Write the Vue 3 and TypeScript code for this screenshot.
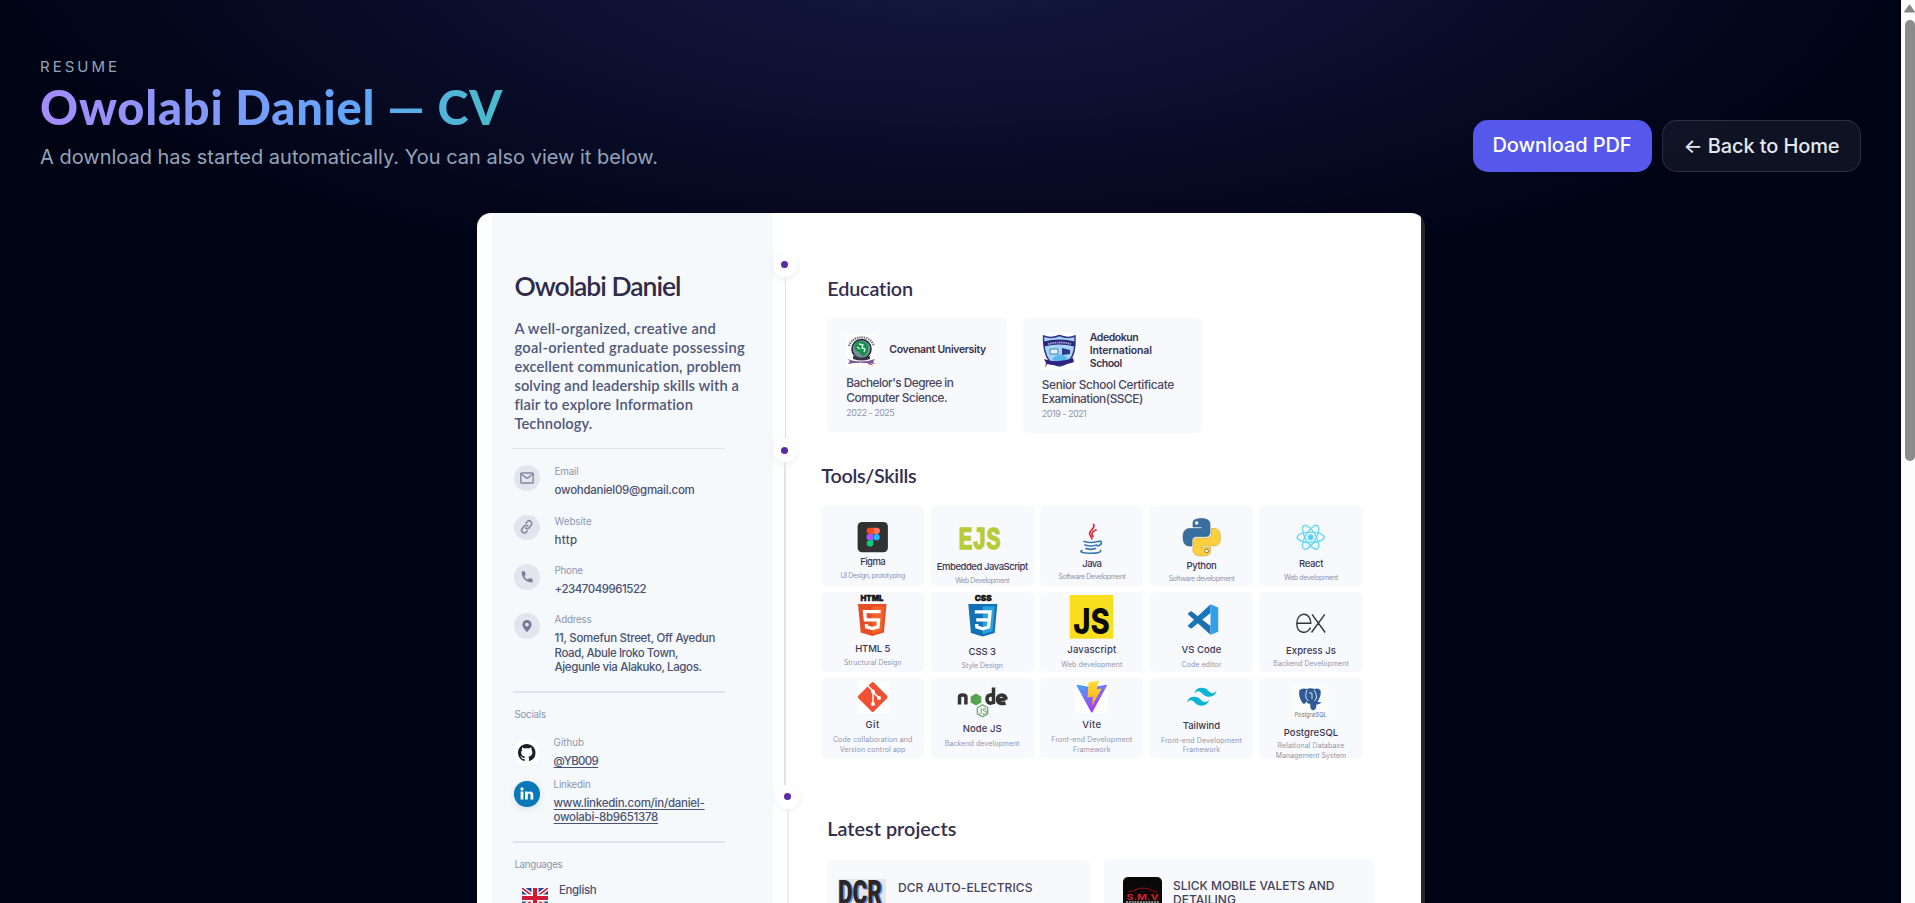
<script setup lang="ts">
interface Line {
  text: string
  width: number
}
interface Contact {
  icon: 'mail' | 'link' | 'phone' | 'pin'
  label: Line
  value: Line[]
}
interface Skill {
  id: string
  name: Line
  detail: Line[]
  artHeight: number
  gap: number
}

// Adjusts tracking so that a line of text fills its intended measure.
const vFit = {
  mounted(el: HTMLElement, binding: { value: number }) {
    const natural = el.getBoundingClientRect().width
    const count = (el.textContent ?? '').length
    if (count > 0) {
      el.style.letterSpacing = `${(binding.value - natural) / count}px`
    }
  },
}

const line = (text: string, width: number): Line => ({ text, width })

const summary: Line[] = [
  line('A well-organized, creative and', 202),
  line('goal-oriented graduate possessing', 230.5),
  line('excellent communication, problem', 227),
  line('solving and leadership skills with a', 224.5),
  line('flair to explore Information', 179),
  line('Technology.', 78),
]

const contacts: Contact[] = [
  { icon: 'mail', label: line('Email', 24), value: [line('owohdaniel09@gmail.com', 140)] },
  { icon: 'link', label: line('Website', 37), value: [line('http', 23)] },
  { icon: 'phone', label: line('Phone', 28), value: [line('+2347049961522', 91.5)] },
  {
    icon: 'pin',
    label: line('Address', 37),
    value: [
      line('11, Somefun Street, Off Ayedun', 160.5),
      line('Road, Abule Iroko Town,', 123.5),
      line('Ajegunle via Alakuko, Lagos.', 147),
    ],
  },
]

const skills: Skill[] = [
  { id: 'figma', name: line('Figma', 25), detail: [line('UI Design, prototyping', 64.5)], artHeight: 49.5, gap: 3.1 },
  { id: 'ejs', name: line('Embedded JavaScript', 91), detail: [line('Web Development', 54)], artHeight: 54.3, gap: 3.1 },
  { id: 'java', name: line('Java', 19), detail: [line('Software Development', 67)], artHeight: 50.8, gap: 3.1 },
  { id: 'python', name: line('Python', 30), detail: [line('Software development', 66)], artHeight: 52.8, gap: 3.1 },
  { id: 'react', name: line('React', 24), detail: [line('Web development', 54)], artHeight: 51.5, gap: 2.9 },
  { id: 'html', name: line('HTML 5', 35), detail: [line('Structural Design', 58)], artHeight: 50, gap: 4.3 },
  { id: 'css', name: line('CSS 3', 27.5), detail: [line('Style Design', 41.5)], artHeight: 53, gap: 4.3 },
  { id: 'js', name: line('Javascript', 49), detail: [line('Web development', 61)], artHeight: 51.6, gap: 4 },
  { id: 'vscode', name: line('VS Code', 40), detail: [line('Code editor', 40)], artHeight: 51.3, gap: 4.2 },
  { id: 'express', name: line('Express Js', 50), detail: [line('Backend Development', 75.5)], artHeight: 52.3, gap: 3 },
  { id: 'git', name: line('Git', 14.5), detail: [line('Code collaboration and', 79.5), line('Version control app', 66)], artHeight: 40.8, gap: 4.5 },
  { id: 'node', name: line('Node JS', 39), detail: [line('Backend development', 75)], artHeight: 44.8, gap: 4 },
  { id: 'vite', name: line('Vite', 19), detail: [line('Front-end Development', 81), line('Framework', 37.5)], artHeight: 40.8, gap: 4.5 },
  { id: 'tailwind', name: line('Tailwind', 37.5), detail: [line('Front-end Development', 81), line('Framework', 37.5)], artHeight: 41.3, gap: 4.5 },
  { id: 'postgres', name: line('PostgreSQL', 54.5), detail: [line('Relational Database', 67), line('Management System', 70.5)], artHeight: 48.2, gap: 3 },
]
</script>

<template>
  <div class="page">
    <div class="view">
      <header class="top">
        <div class="intro">
          <p class="eyebrow"><span v-fit="80">RESUME</span></p>
          <h1 class="title"><span v-fit="463">Owolabi Daniel — CV</span></h1>
          <p class="lead"><span v-fit="618">A download has started automatically. You can also view it below.</span></p>
        </div>
        <div class="actions">
          <button class="btn primary"><span v-fit="139">Download PDF</span></button>
          <button class="btn ghost"><span v-fit="156">← Back to Home</span></button>
        </div>
      </header>

      <main class="paper">
        <aside class="side">
          <h2 class="name"><span v-fit="166">Owolabi Daniel</span></h2>
          <div class="summary">
            <p v-for="l in summary" :key="l.text"><span v-fit="l.width">{{ l.text }}</span></p>
          </div>
          <hr class="rule thin" />
          <ul class="contacts">
            <li v-for="c in contacts" :key="c.icon" class="entry">
              <span class="badge">
                <svg width="26" height="26" viewBox="0 0 26 26">
                  <g v-if="c.icon === 'mail'" fill="none" stroke="#8187a3" stroke-width="1.4">
                    <rect x="6.8" y="8" width="12.4" height="10" rx=".8" />
                    <path d="M7 9l6 4.3L19 9" />
                  </g>
                  <g v-else-if="c.icon === 'link'" transform="rotate(-8 13 13)" fill="none" stroke="#8187a3" stroke-width="1.5" stroke-linecap="round">
                    <path d="M11.4 13.7a2.6 2.6 0 0 0 3.8.2l2.3-2.3a2.6 2.6 0 0 0-3.7-3.7l-1.2 1.2" />
                    <path d="M14 12a2.6 2.6 0 0 0-3.8-.2l-2.3 2.3a2.6 2.6 0 0 0 3.7 3.7l1.2-1.2" />
                  </g>
                  <path v-else-if="c.icon === 'phone'" fill="#7b819d" d="M7.6 8.2c0 5.9 4.7 10.3 10.500 10.300.3 0 .5-.2.5-.5v-2.600c0-.3-.2-.5-.4-.6l-2.800-.6c-.3 0-.5 0-.6.2l-1.100 1.200c-1.500-.9-2.600-2-3.400-3.400l1.200-1.200c.2-.2.2-.4.1-.6l-.7-2.800c-.1-.3-.3-.4-.5-.4H8.100c-.3 0-.5.3-.5.7z" />
                  <path v-else fill="#737996" fill-rule="evenodd" d="M13 7a4.600 4.600 0 0 0-4.600 4.600c0 3.300 4.600 7.600 4.600 7.600s4.600-4.300 4.600-7.600A4.600 4.600 0 0 0 13 7zm0 2.700a1.900 1.900 0 1 1 0 3.800 1.900 1.900 0 0 1 0-3.800z" />
                </svg>
              </span>
              <div>
                <p class="label"><span v-fit="c.label.width">{{ c.label.text }}</span></p>
                <p v-for="v in c.value" :key="v.text" class="value"><span v-fit="v.width">{{ v.text }}</span></p>
              </div>
            </li>
          </ul>
          <hr class="rule second" />
          <p class="label section"><span v-fit="31.5">Socials</span></p>
          <div class="entry social github">
            <span class="badge white">
              <svg width="17.500" height="17.500" viewBox="0 0 16 16">
                <path fill="#1d2028" d="M8 0C3.580 0 0 3.580 0 8c0 3.540 2.290 6.530 5.470 7.590.4.070.55-.17.55-.38 0-.19-.01-.82-.01-1.490-2.010.37-2.530-.49-2.690-.94-.09-.23-.48-.94-.82-1.130-.28-.15-.68-.52-.01-.53.63-.01 1.080.58 1.230.82.720 1.210 1.870.870 2.330.660.070-.52.280-.870.510-1.070-1.780-.2-3.640-.89-3.640-3.950 0-.87.310-1.590.820-2.150-.08-.2-.36-1.020.080-2.120 0 0 .67-.21 2.200.820.640-.18 1.320-.27 2-.27s1.360.090 2 .27c1.530-1.040 2.200-.82 2.200-.82.440 1.100.160 1.920.080 2.120.510.560.820 1.270.820 2.150 0 3.070-1.870 3.750-3.650 3.950.290.250.540.730.540 1.480 0 1.070-.01 1.930-.01 2.200 0 .21.150.460.550.380A8.010 8.010 0 0 0 16 8c0-4.420-3.580-8-8-8z" />
              </svg>
            </span>
            <div>
              <p class="label"><span v-fit="30.500">Github</span></p>
              <p class="value linked"><span v-fit="45">@YB009</span></p>
            </div>
          </div>
          <div class="entry social linkedin">
            <span class="badge blue">
              <svg width="14" height="13" viewBox="0 0 14 13" fill="#fff">
                <circle cx="2" cy="1.900" r="1.600" />
                <path d="M.6 4.600h2.800V12.500H.6zM5 4.600h2.700v1.100c.5-.8 1.400-1.300 2.500-1.300 2.400 0 3.100 1.500 3.100 3.700v4.400h-2.800V8.600c0-1-.1-2-1.300-2s-1.400.9-1.400 2v3.900H5z" />
              </svg>
            </span>
            <div>
              <p class="label"><span v-fit="37">Linkedin</span></p>
              <p class="value linked"><span v-fit="151">www.linkedin.com/in/daniel-</span></p>
              <p class="value linked"><span v-fit="104.500">owolabi-8b9651378</span></p>
            </div>
          </div>
          <hr class="rule third" />
          <p class="label section"><span v-fit="48">Languages</span></p>
          <div class="language">
            <svg class="flag" width="26" height="26" viewBox="0 0 26 26">
              <rect width="26" height="26" rx="3.500" fill="#2b4596" />
              <path d="M0 0l26 20M26 0L0 20" stroke="#fff" stroke-width="4.500" />
              <path d="M0 0l26 20M26 0L0 20" stroke="#cf1b38" stroke-width="1.700" />
              <path d="M13 0v26M0 10h26" stroke="#fff" stroke-width="7" />
              <path d="M13 0v26M0 10h26" stroke="#cf1b38" stroke-width="4" />
            </svg>
            <p class="value"><span v-fit="37.500">English</span></p>
          </div>
        </aside>

        <div class="rail">
          <span class="node"></span>
          <span class="stem first"></span>
          <span class="node"></span>
          <span class="stem middle"></span>
          <span class="node shifted"></span>
          <span class="stem last"></span>
        </div>

        <section class="body">
          <h3 class="heading"><span v-fit="86">Education</span></h3>
          <div class="schools">
            <article class="card school">
              <div class="school-head">
                <svg class="crest" width="31" height="33" viewBox="0 0 31 33">
                  <rect width="31" height="33" fill="#fff" />
                  <path d="M3 12A13 12 0 0 1 28 12" fill="none" stroke="#77787b" stroke-width="2.200" stroke-dasharray="1.500 .8" />
                  <circle cx="15.500" cy="15" r="10.300" fill="#1f2b3c" />
                  <circle cx="15.500" cy="15" r="8.800" fill="#7c8f97" />
                  <path d="M10 9c4-3 11-2 12 3s-1 9-5 10c-3-1-3-4-6-5-3-2-3-5-1-8z" fill="#12934c" />
                  <path d="M13 10l4 1-1 3 3 1-1 3M11 13l3 2" fill="none" stroke="#e4f5ea" stroke-width="1.300" />
                  <path d="M7 22q8 4 17 0v3q-8 3-17 0z" fill="#38343f" />
                  <path d="M1 25q14 5 28 0l-2 3 2 2q-13-2-21-1l-6 1 2-3z" fill="#79559b" />
                  <path d="M22 28l6 4-6-2z" fill="#9a3d6e" />
                </svg>
                <p class="school-name"><span v-fit="96.500">Covenant University</span></p>
              </div>
              <p class="degree"><span v-fit="107">Bachelor's Degree in</span></p>
              <p class="degree"><span v-fit="101">Computer Science.</span></p>
              <p class="years"><span v-fit="48">2022 - 2025</span></p>
            </article>
            <article class="card school second">
              <div class="school-head">
                <svg class="crest" width="37" height="37" viewBox="0 0 37 37">
                  <rect width="37" height="37" fill="#fff" />
                  <path d="M2.500 3q8 3 16-.5 8 3.500 15.500.5 1 18-6 25-4 4-9.500 5-6-1-10-5Q2 20 2.500 3z" fill="#a6d4f3" stroke="#35358a" stroke-width="1.500" />
                  <path d="M2.800 8.500q16-4 31 0l-.5 5q-15-4-30 0z" fill="#2d247f" />
                  <path d="M7 11q12-3 23 0" stroke="#a9a5d8" stroke-width="1.800" stroke-dasharray="1.500 .7" fill="none" />
                  <path d="M9 16h8v5H9z" fill="#e5f3fc" stroke="#477eb4" />
                  <path d="M21 15l8 2v4l-8 1z" fill="#2b3a8a" />
                  <path d="M11 26q8-9 16 0l-8 6z" fill="#5ab6ec" />
                  <path d="M3 26q14 5 29-1l1 4-3 1q-12 4-24 1l-2 4 1-5z" fill="#2d247f" />
                </svg>
                <div class="school-lines">
                  <p class="school-name"><span v-fit="48.500">Adedokun</span></p>
                  <p class="school-name"><span v-fit="62">International</span></p>
                  <p class="school-name"><span v-fit="32">School</span></p>
                </div>
              </div>
              <p class="degree"><span v-fit="132">Senior School Certificate</span></p>
              <p class="degree"><span v-fit="101">Examination(SSCE)</span></p>
              <p class="years"><span v-fit="44.500">2019 - 2021</span></p>
            </article>
          </div>

          <h3 class="heading tools"><span v-fit="95">Tools/Skills</span></h3>
          <div class="skills">
            <article v-for="s in skills" :key="s.id" class="card skill">
              <svg class="art" width="103.300" :height="s.artHeight" :viewBox="`0 0 103.300 ${s.artHeight}`">
                <g v-if="s.id === 'figma'">
                  <rect x="36.600" y="16" width="30.300" height="30.300" rx="4.500" fill="#323232" />
                  <path d="M48.700 21.700h3.600V28h-3.600a3.150 3.150 0 0 1 0-6.300z" fill="#f24e1e" />
                  <path d="M52.300 21.700h3.500a3.150 3.150 0 0 1 0 6.300h-3.500z" fill="#ff7262" />
                  <path d="M48.700 28h3.600v6.300h-3.600a3.150 3.150 0 0 1 0-6.300z" fill="#a259ff" />
                  <circle cx="55.600" cy="31.150" r="3.150" fill="#1abcfe" />
                  <path d="M48.700 34.300h3.600v3.150a3.300 3.150 0 1 1-3.600-3.150z" fill="#0acf83" />
                </g>
                <text v-else-if="s.id === 'ejs'" class="logo-ejs" x="27.500" y="42.600" textLength="42" lengthAdjust="spacingAndGlyphs">EJS</text>
                <g v-else-if="s.id === 'java'" fill="none" stroke-linecap="round">
                  <path d="M53.500 18.500c3 4-6 6-3.500 10.500 1 1.500 1.500 2 1.800 4M56 24c-5 2-4.500 4-3 6.500" stroke="#d9282f" stroke-width="1.700" />
                  <path d="M44 35.500q7 2 13.500 0M45 39q6 2 11.500 0M46 42.500q5 1.700 9.500 0M58.500 35.500c4-1.500 4 3.500-1 4.500" stroke="#3a79ad" stroke-width="1.700" />
                  <path d="M42 44.500c-4 1.500 2 3 9 2.800 6 0 11-1.200 9.500-3" stroke="#3a79ad" stroke-width="1.500" />
                </g>
                <g v-else-if="s.id === 'python'" stroke-width=".6">
                  <path d="M51.500 12.500c-9 0-8.500 4-8.500 4V21h9v1.500H39.500s-6.500-.5-6.500 8.500 5.500 9 5.500 9H42v-4.500c0-5 4.500-5 4.500-5h9.500c4 0 4-4 4-4v-9s0-5-8.500-5z" fill="#376f9f" stroke="#315d83" />
                  <path d="M52 50c9 0 8.500-4 8.500-4v-4.500h-9V40H64s6.500.5 6.500-8.500-5.500-9-5.500-9h-3.500V27c0 5-4.500 5-4.500 5H47c-4 0-4 4-4 4v9s0 5 9 5z" fill="#ffd03e" stroke="#c6a13e" />
                  <circle cx="46.700" cy="17" r="1.700" fill="#fff" />
                  <circle cx="56.600" cy="45" r="1.900" fill="#fff" stroke="#87743b" stroke-width="1" />
                </g>
                <g v-else-if="s.id === 'react'" fill="none" stroke="#68d9f8" stroke-width="1.400">
                  <ellipse cx="51.650" cy="31.300" rx="13.500" ry="5.200" />
                  <ellipse cx="51.650" cy="31.300" rx="13.500" ry="5.200" transform="rotate(60 51.650 31.300)" />
                  <ellipse cx="51.650" cy="31.300" rx="13.500" ry="5.200" transform="rotate(120 51.650 31.300)" />
                  <circle cx="51.650" cy="31.300" r="2.400" fill="#4ccff4" />
                </g>
                <g v-else-if="s.id === 'html'">
                  <text class="logo-cap" x="39.500" y="9.400" textLength="23" lengthAdjust="spacingAndGlyphs">HTML</text>
                  <path d="M37 12h28.500l-2.600 28.500-11.600 3.500-11.600-3.500z" fill="#e44d26" />
                  <path d="M51.300 14.200h11.800l-2.200 24.600-9.600 2.900z" fill="#f1652a" />
                  <path d="M59.600 19.700H43.500l.9 8.200h13.200l-.6 7-5.700 1.700-5.700-1.700-.2-2.800" fill="none" stroke="#fff" stroke-width="3.300" />
                </g>
                <g v-else-if="s.id === 'css'">
                  <text class="logo-cap" x="43.700" y="9.400" textLength="17" lengthAdjust="spacingAndGlyphs">CSS</text>
                  <path d="M37.300 12h29L63.700 41l-11.900 3.600L39.900 41z" fill="#1470b5" />
                  <path d="M51.800 14.300h12l-2.200 25-9.800 3z" fill="#2ba3dc" />
                  <path d="M43.800 19.900H59l-.7 7.900H45.200M58.300 27.800l-.7 7.200-5.800 1.800-5.900-1.800-.2-3" fill="none" stroke="#fff" stroke-width="3.300" />
                </g>
                <g v-else-if="s.id === 'js'">
                  <rect x="29.700" y="3" width="43.500" height="43.700" fill="#f7df1e" />
                  <text class="logo-js" x="33.200" y="42" textLength="36.500" lengthAdjust="spacingAndGlyphs">JS</text>
                </g>
                <g v-else-if="s.id === 'vscode'">
                  <path d="M60.500 12.300L38.200 33.200q-.6.700.2 1.400l2 1.700q.7.400 1.400 0L60.500 21z" fill="#1777bd" />
                  <path d="M60.500 42.700L38.200 22.500q-.6-.7.200-1.400l2-1.700q.7-.4 1.400 0L60.500 34z" fill="#1d6fae" />
                  <path d="M60.500 12.300l7.700 3.200v24.200l-7.700 3z" fill="#31a0ec" />
                </g>
                <g v-else-if="s.id === 'express'" fill="none" stroke="#333" stroke-width="1.400">
                  <path d="M37.600 31.300h14.200c0-12-14-12-14 .2 0 11.500 11.500 10.500 13.700 4M53 22.300l13.200 18.200M65.800 22.300L52.500 40.500" />
                </g>
                <g v-else-if="s.id === 'git'">
                  <rect x="36" y="3" width="32" height="32" fill="#fff" />
                  <rect x="40.700" y="8" width="22" height="22" rx="1.600" transform="rotate(45 51.700 19)" fill="#f05033" />
                  <path d="M47 8l5 5v14M52 14l6 6" fill="none" stroke="#fff" stroke-width="1.500" />
                  <circle cx="52" cy="13.500" r="2" fill="#fff" /><circle cx="52" cy="26" r="2" fill="#fff" /><circle cx="58" cy="20" r="2" fill="#fff" />
                </g>
                <g v-else-if="s.id === 'node'">
                  <g fill="none" stroke="#333" stroke-width="3.500">
                    <path d="M28.500 26.500V19q0-2 3.200-2t3.200 2v7.500M62.500 9.500v15l-3.200.8q-3.300-.5-3.300-4.200t3.300-4.200l3.200.6M75 21.500c0-6-8.500-6-8.500 0 0 4.500 5 4.500 8 3.500M67 22.500l8-2" />
                  </g>
                  <path d="M45 15.500l5.300 3v6l-5.300 3-5.300-3v-6z" fill="#57a44f" />
                  <path d="M51.500 26.800l5.200 3v6l-5.200 3-5.200-3v-6z" fill="#f4f9f4" stroke="#6ea56d" stroke-width="1.200" />
                  <path d="M50.300 30v4.500q-.5 1.300-2 .6M55 31q-3-1-3 .7t3 1.500-.5 2.100-2.500-.3" fill="none" stroke="#6ea56d" />
                </g>
                <g v-else-if="s.id === 'vite'">
                  <defs>
                    <linearGradient id="viteBody" x1="0" y1="0" x2=".6" y2="1"><stop offset="0" stop-color="#41a8ff" /><stop offset="1" stop-color="#b032f5" /></linearGradient>
                    <linearGradient id="viteBolt" x1="0" y1="0" x2="0" y2="1"><stop offset="0" stop-color="#ffdf38" /><stop offset="1" stop-color="#ffa51a" /></linearGradient>
                  </defs>
                  <rect x="35.500" y="3" width="32" height="32" fill="#fff" />
                  <path d="M36.500 7.500q0-.8.8-.7l14.400 2.500 14.500-2.500q1-.1.700.9L52.500 34q-.8 1.100-1.500 0z" fill="url(#viteBody)" />
                  <path d="M48.500 4.300l10.500-1.500-2.300 8.500 5-.8-9.700 17.500.9-9.500-5.400 1z" fill="url(#viteBolt)" />
                </g>
                <path v-else-if="s.id === 'tailwind'" transform="translate(36.800 9.800) scale(1.240)" fill="#06b6d4" d="M6 4.800q1.200-4.800 6-4.800c4.800 0 5.400 3.600 7.800 4.200q2.400.6 4.200-1.800-1.200 4.800-6 4.800c-4.800 0-5.400-3.600-7.800-4.200Q7.800 2.400 6 4.800zM0 12q1.200-4.800 6-4.800c4.800 0 5.400 3.600 7.800 4.200q2.400.6 4.200-1.800-1.200 4.800-6 4.800c-4.800 0-5.400-3.600-7.800-4.200Q1.800 9.600 0 12z" />
                <g v-else>
                  <rect x="33.500" y="7" width="36" height="34" fill="#fafbfb" />
                  <path d="M40.500 12q3-2.500 7-1 4-1.500 8 0 4-1.500 6 1.500c1 4-1 8-3 11.500l4 .3q-2 2.500-5 2l-.5 4q-3 4-5.500 0l-.5-5q-1 1-2.500 0l-1-2q-1 3-3 2.500C42 24 39 17 40.500 12z" fill="#2f5a95" />
                  <path d="M48 12q-2 4-1 8l2.500 3M55 12q3 4 2.500 8l-2 3M50 15h3v6" fill="none" stroke="#d6e3f2" stroke-width="1" />
                  <text class="logo-pg" x="35.500" y="39.500" textLength="32" lengthAdjust="spacingAndGlyphs">Postgre<tspan fill="#3f72b3">SQL</tspan></text>
                </g>
              </svg>
              <p class="skill-name"><span v-fit="s.name.width">{{ s.name.text }}</span></p>
              <div class="skill-detail" :style="{ marginTop: s.gap + 'px' }">
                <p v-for="d in s.detail" :key="d.text"><span v-fit="d.width">{{ d.text }}</span></p>
              </div>
            </article>
          </div>

          <h3 class="heading latest"><span v-fit="129">Latest projects</span></h3>
          <div class="projects">
            <article class="card project dcr">
              <svg width="48" height="38" viewBox="0 0 48 38">
                <rect width="48" height="38" fill="#e6e7ec" />
                <text class="logo-dcr" x="1.500" y="25.500" fill="#6d8fd8" textLength="44" lengthAdjust="spacingAndGlyphs">DCR</text>
                <text class="logo-dcr" x="0" y="25" fill="#2b2728" textLength="44" lengthAdjust="spacingAndGlyphs">DCR</text>
              </svg>
              <div><p class="project-name"><span v-fit="134.500">DCR AUTO-ELECTRICS</span></p></div>
            </article>
            <article class="card project slick">
              <svg width="39" height="38" viewBox="0 0 39 38">
                <rect width="39" height="38" rx="5" fill="#0b0809" />
                <path d="M5 15q8-2 11-3.500 8-1.500 13 2l5 2" fill="none" stroke="#7d1119" stroke-width="1.200" />
                <text class="logo-smv" x="3.500" y="22.500" textLength="32" lengthAdjust="spacingAndGlyphs">S.M.V</text>
                <path d="M3 25h33" stroke="#b5b5b5" stroke-width="1.600" stroke-dasharray="2 .8" />
              </svg>
              <div>
                <p class="project-name"><span v-fit="161.500">SLICK MOBILE VALETS AND</span></p>
                <p class="project-name"><span v-fit="63">DETAILING</span></p>
              </div>
            </article>
          </div>
        </section>
      </main>
    </div>
    <div class="scrollbar">
      <svg width="11" height="9" viewBox="0 0 11 9"><path d="M5.500 .8L10.500 8H.5z" fill="#858585" stroke="#858585" stroke-linejoin="round" /></svg>
      <span class="thumb"></span>
    </div>
  </div>
</template>

<style>
html,
body {
  margin: 0;
  overflow: hidden;
  background: #020617;
}
</style>

<style scoped>
.page {
  display: flex;
  width: 1915px;
  height: 903px;
  overflow: hidden;
  font-family: Inter, 'Liberation Sans', sans-serif;
}
.page * {
  box-sizing: border-box;
}
p,
h1,
h2,
h3,
ul,
hr {
  margin: 0;
  padding: 0;
  border: 0;
}
p > span,
h1 > span,
h2 > span,
h3 > span,
button > span {
  display: inline-block;
  white-space: nowrap;
}
.view {
  flex: 1;
  display: flex;
  flex-direction: column;
  background: radial-gradient(ellipse 960px 350px at 50% -60px, rgba(99, 102, 241, 0.22), rgba(99, 102, 241, 0)), #010415;
}
.top {
  height: 213px;
  flex: none;
  display: flex;
  justify-content: space-between;
  align-items: flex-start;
  padding: 0 40px;
}
.intro {
  padding-top: 56px;
}
.eyebrow {
  height: 21px;
  line-height: 21px;
  font-size: 15px;
  color: #94a3b8;
}
.title {
  height: 62px;
  line-height: 60px;
  font-family: Lato, sans-serif;
  font-size: 47px;
  font-weight: 900;
  color: transparent;
  background: linear-gradient(90deg, #a78bfa, #60a5fa 50%, #34d399);
  -webkit-background-clip: text;
  background-clip: text;
}
.lead {
  margin-top: 3px;
  line-height: 30px;
  font-size: 20px;
  color: #94a3b8;
}
.actions {
  display: flex;
  gap: 10px;
  padding-top: 120px;
}
.btn {
  height: 52px;
  border: 0;
  border-radius: 15px;
  font-family: inherit;
  font-size: 20px;
  font-weight: 500;
  line-height: 30px;
}
.primary {
  width: 179px;
  padding: 10px 20px 12px 19px;
  background: #5558ea;
  color: #fff;
}
.ghost {
  width: 199px;
  padding: 10px 20px 10px;
  border: 1px solid rgba(255, 255, 255, 0.12);
  background: rgba(255, 255, 255, 0.06);
  color: #e2e8f0;
}
.paper {
  width: 948px;
  height: 690px;
  flex: none;
  margin-left: 477px;
  display: flex;
  padding: 0 4px 0 15px;
  overflow: hidden;
  border-radius: 14px 14px 0 0;
  background: linear-gradient(90deg, #fff 943.500px, #24282a 944.500px);
}
.side {
  width: 280.500px;
  flex: none;
  padding: 56.500px 0 0 22.400px;
  background: #f5f9fc;
}
.name {
  height: 32px;
  line-height: 32px;
  font-family: Lato, sans-serif;
  font-size: 26.500px;
  font-weight: 600;
  color: #2f2b48;
}
.summary {
  margin-top: 17.300px;
  line-height: 19px;
  font-family: Lato, sans-serif;
  font-size: 14.700px;
  font-weight: 600;
  color: #50587a;
}
.summary p {
  height: 19px;
}
.rule {
  width: 212px;
  height: 2px;
  margin-left: -1.400px;
  background: #e0e4ec;
}
.rule.thin {
  height: 1px;
  margin-top: 15px;
}
.rule.second {
  margin-top: 16px;
}
.rule.third {
  margin-top: 15.800px;
}
.contacts {
  margin-top: 16.500px;
  display: flex;
  flex-direction: column;
  gap: 17px;
  list-style: none;
}
.entry {
  display: flex;
  gap: 14.700px;
}
.badge {
  width: 25.500px;
  height: 25.500px;
  flex: none;
  display: flex;
  align-items: center;
  justify-content: center;
  border-radius: 50%;
  background: #e2e5ed;
}
.badge svg {
  flex: none;
}
.badge.white {
  margin-top: 4px;
  background: #fff;
}
.badge.blue {
  margin-top: 3px;
  background: #0878b7;
  box-shadow: 0 2px 6px rgba(60, 80, 120, 0.15);
}
.label {
  height: 13px;
  line-height: 13px;
  font-size: 9.800px;
  color: #8e94ab;
}
.value {
  height: 14.400px;
  line-height: 14.400px;
  font-size: 11.500px;
  font-weight: 500;
  color: #4b5272;
}
.label + .value {
  margin-top: 5px;
}
.linked span {
  text-decoration: underline;
  text-underline-offset: 1.500px;
}
.section {
  margin-top: 15.500px;
}
.social {
  gap: 13.700px;
}
.social .label + .value {
  margin-top: 4.800px;
}
.github {
  margin-top: 15.300px;
}
.linkedin {
  margin-top: 9.600px;
}
.language {
  display: flex;
  gap: 11px;
  margin: 11.500px 0 0 7.500px;
}
.flag {
  margin-top: 5.500px;
}
.rail {
  width: 30px;
  flex: none;
  display: flex;
  flex-direction: column;
  padding-top: 39.700px;
}
.node {
  width: 24px;
  height: 24px;
  flex: none;
  display: flex;
  align-items: center;
  justify-content: center;
  border-radius: 50%;
  background: #fff;
  box-shadow: 0 2px 7px rgba(40, 50, 90, 0.08);
}
.node::after {
  content: '';
  width: 7px;
  height: 7px;
  border-radius: 50%;
  background: #5b2ca8;
}
.node.shifted {
  margin-left: 3px;
}
.stem {
  width: 1px;
  flex: none;
  margin-left: 12px;
  background: #dcdfeb;
}
.stem.first {
  height: 161.800px;
}
.stem.middle {
  width: 2px;
  margin-left: 11.500px;
  height: 322.500px;
  background: #e1e4ec;
}
.stem.last {
  width: 2px;
  margin-left: 14px;
  flex: 1;
  background: #ececf4;
}
.body {
  flex: 1;
  padding: 62.900px 0 0 18.500px;
}
.heading {
  height: 24px;
  margin-left: 6.300px;
  line-height: 24px;
  font-family: Lato, sans-serif;
  font-size: 19.800px;
  font-weight: 600;
  color: #332f4d;
}
.card {
  border-radius: 5px;
  background: #f8f9fd;
}
.schools {
  display: flex;
  align-items: flex-start;
  gap: 16px;
  margin: 18.600px 0 0 6px;
}
.school {
  width: 179.500px;
  height: 113.700px;
  padding: 15.500px 0 0 19.300px;
}
.school.second {
  height: 115px;
}
.school-head {
  height: 42.500px;
  display: flex;
  align-items: flex-start;
  gap: 12px;
}
.school-head > .school-name {
  margin-top: 10.300px;
}
.second .school-head {
  height: 43.800px;
}
.second .crest {
  margin: -1px 0 0 -1px;
}
.school-lines {
  margin-top: -1.500px;
}
.school-name {
  height: 12.700px;
  line-height: 12.700px;
  font-size: 10.500px;
  font-weight: 600;
  color: #37334f;
}
.degree {
  height: 14.300px;
  line-height: 14.300px;
  font-size: 11.800px;
  font-weight: 500;
  color: #49465f;
}
.years {
  height: 14px;
  margin-top: 0.800px;
  line-height: 14px;
  font-size: 9px;
  color: #8f96ab;
}
.heading.tools {
  margin: 30px 0 0 0.300px;
}
.skills {
  display: grid;
  grid-template-columns: repeat(5, 103.300px);
  grid-auto-rows: 79.600px;
  gap: 6.300px;
  margin-top: 18.700px;
}
.skill {
  display: flex;
  flex-direction: column;
  align-items: center;
}
.art {
  display: block;
  flex: none;
}
.skill-name {
  height: 11.400px;
  margin-top: 0.600px;
  flex: none;
  line-height: 12px;
  font-size: 9.500px;
  font-weight: 500;
  color: #3a3651;
}
.skill-detail {
  line-height: 9.600px;
  font-size: 7px;
  text-align: center;
  color: #8f97ad;
}
.skill-detail p {
  height: 9.600px;
}
.heading.latest {
  margin-top: 58.300px;
}
.projects {
  display: flex;
  align-items: flex-start;
  gap: 14.500px;
  margin: 19.300px 0 0 6.300px;
}
.project {
  width: 262.700px;
  height: 130px;
  display: flex;
}
.dcr {
  margin-top: 1px;
  padding: 19px 0 0 10.700px;
  gap: 12px;
}
.slick {
  width: 271px;
  padding: 18px 0 0 18.500px;
  gap: 11px;
}
.project-name {
  height: 14.500px;
  margin-top: 1.500px;
  line-height: 14.500px;
  font-size: 12px;
  font-weight: 500;
  color: #45425c;
}
.project-name + .project-name {
  margin-top: 0;
}
.logo-ejs {
  font: 700 31px 'Liberation Mono', monospace;
  fill: #b8ca35;
  stroke: #b8ca35;
  stroke-width: 1.300px;
}
.logo-cap {
  font: 900 8px Inter, sans-serif;
  fill: #111;
  stroke: #111;
  stroke-width: 0.400px;
}
.logo-js {
  font: 800 35px Inter, sans-serif;
  fill: #0a0a0a;
}
.logo-pg {
  font: italic 6.500px Inter, sans-serif;
  fill: #777;
}
.logo-dcr {
  font: 900 34px Roboto, sans-serif;
}
.logo-smv {
  font: 700 8px Inter, sans-serif;
  fill: #d5202a;
}
.scrollbar {
  width: 14px;
  flex: none;
  display: flex;
  flex-direction: column;
  align-items: flex-end;
  padding-top: 4px;
  background: #fcfcfc;
}
.thumb {
  width: 10px;
  height: 441px;
  margin-top: 7px;
  border-radius: 5px;
  background: #8b8b8b;
}
</style>
